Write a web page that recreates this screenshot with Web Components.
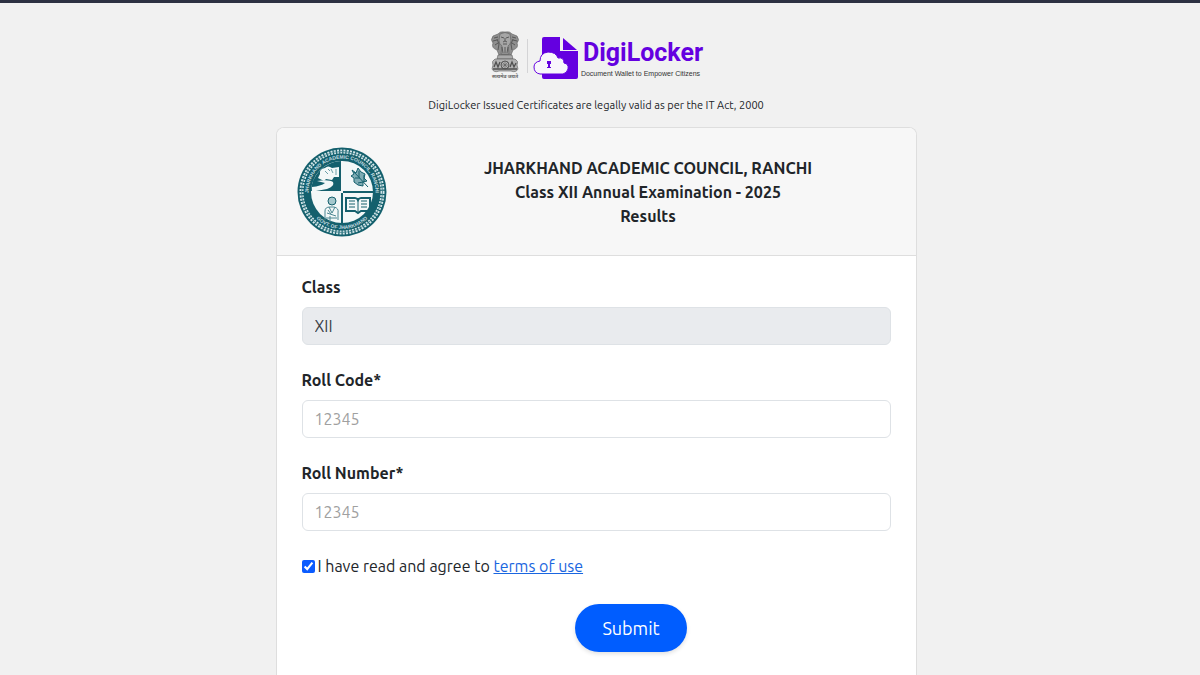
<!DOCTYPE html>
<html lang="en">
<head>
<meta charset="utf-8">
<meta name="viewport" content="width=device-width, initial-scale=1">
<title>DigiLocker Results</title>
<style>
  body {
    margin: 0;
    background: #f1f1f1;
    color: #212529;
    font: 16px/24px Ubuntu, "Noto Sans", "Open Sans", sans-serif;
  }
</style>
</head>
<body>
<results-page>
  <digilocker-logo slot="top"></digilocker-logo>
  <span slot="note">DigiLocker Issued Certificates are legally valid as per the IT Act, 2000</span>
  <result-card>
    <council-seal slot="seal"></council-seal>
    <span slot="title">JHARKHAND ACADEMIC COUNCIL, RANCHI<br>Class XII Annual Examination - 2025<br>Results</span>
    <form-field label="Class" value="XII" disabled></form-field>
    <form-field label="Roll Code*" placeholder="12345"></form-field>
    <form-field label="Roll Number*" placeholder="12345"></form-field>
    <terms-check></terms-check>
    <submit-button>Submit</submit-button>
  </result-card>
</results-page>

<script>
class ResultsPage extends HTMLElement {
  connectedCallback() {
    this.attachShadow({ mode: 'open' });
    this.shadowRoot.innerHTML = `
      <style>
        :host {
          display: flex;
          flex-direction: column;
          align-items: center;
          box-sizing: border-box;
          min-height: 100vh;
          border-top: 3px solid #2d3142;
          padding: 24px 8px 0 0;
        }
        .note {
          margin: 10px 0 12px;
          font-size: 11px;
          line-height: 20px;
          text-align: center;
        }
        main {
          display: flex;
          flex: 1;
          width: 100%;
          max-width: 641px;
        }
      </style>
      <slot name="top"></slot>
      <p class="note"><slot name="note"></slot></p>
      <main><slot></slot></main>
    `;
  }
}
customElements.define('results-page', ResultsPage);

class DigilockerLogo extends HTMLElement {
  connectedCallback() {
    this.attachShadow({ mode: 'open' });
    this.shadowRoot.innerHTML = `
      <style>
        :host { display: flex; align-items: center; height: 58px; }
        svg { display: block; flex: none; }
        .divider { width: 1px; height: 34px; background: #d4d4d6; margin: 0 5px 0 6px; }
        .locker { padding-top: 4px; }
        .brand { margin-left: 3px; padding-top: 6px; color: #6400e0; }
        .name {
          padding-left: 2px;
          font: 700 25px/30px Roboto, sans-serif;
        }
        .tag {
          font: 7px/12px "Liberation Sans", sans-serif;
          color: #333;
        }
      </style>
      <svg class="emblem" width="32" height="50" viewBox="0 0 32 50" role="img" aria-label="State Emblem of India">
        <g fill="#8f8f8f" stroke="#5c5c5c" stroke-width=".6">
          <path d="M9 3Q11 0 16 1Q21 0 23 3L28 5Q31 9 28 12Q30 17 24 19L22 24H10L8 19Q2 17 4 12Q1 9 4 5Z"/>
          <path d="M11 3Q16 0 21 3L22 10Q21 14 19 15L20 23H12L13 15Q10 13 10 9Z" fill="#a6a6a6"/>
          <path d="M9 24H23L24 28H8Z" fill="#aaa"/>
          <path d="M6 28Q2 30 4 34L3 38Q5 42 10 40H22Q27 42 29 38L28 34Q30 30 26 28Z" fill="#b2b2b2"/>
        </g>
        <g fill="none" stroke="#505050" stroke-width=".9">
          <path d="M12 6L15 7M20 6L17 7M14 11Q16 9 18 11M14 13H18M16 7V10"/>
          <path d="M5 7L9 6M4 10L8 9M6 14L9 12M27 7L23 6M28 10L24 9M26 14L23 12"/>
          <path d="M8 8L10 13L9 19M24 8L22 13L23 19M13 16L14 22M19 16L18 22M16 16V22"/>
          <circle cx="16" cy="34" r="4"/>
          <path d="M12 34H20M16 30V38M13 31L19 37M19 31L13 37" stroke-width=".5"/>
          <path d="M5 36L7 31L9 36L11 31M21 36L23 31L25 36L27 32M4 38H28" stroke-width="1.3"/>
        </g>
        <text x="16" y="47" text-anchor="middle" font-size="5" font-weight="700" fill="#666" font-family="Noto Sans Devanagari, Noto Sans, sans-serif">सत्यमेव जयते</text>
      </svg>
      <span class="divider"></span>
      <svg class="locker" width="45" height="44" viewBox="0 0 45 44" aria-hidden="true">
        <path d="M11 1H27V15H45V41Q45 43 43 43H11Q9 43 9 41V3Q9 1 11 1Z" fill="#6400e0"/>
        <path d="M30 2L44 14H30Z" fill="#6400e0"/>
        <path d="M7 38Q1 37 1 31Q1 26 7 25Q7 17 15 16Q23 16 25 22Q31 21 31 27Q36 28 35 33Q34 37 30 38Z" fill="#f8f6fb" stroke="#6400e0"/>
        <path d="M14 25H18V28H17V31H18V32H14V31H15V28H14Z" fill="#6400e0"/>
      </svg>
      <div class="brand">
        <div class="name">DigiLocker</div>
        <div class="tag">Document Wallet to Empower Citizens</div>
      </div>
    `;
  }
}
customElements.define('digilocker-logo', DigilockerLogo);

class CouncilSeal extends HTMLElement {
  connectedCallback() {
    this.attachShadow({ mode: 'open' });
    this.shadowRoot.innerHTML = `
      <style>
        :host { display: block; }
        svg { display: block; }
        text { font: 700 5px "Liberation Sans", sans-serif; fill: #c4dde1; }
      </style>
      <svg width="90" height="90" viewBox="0 0 90 90" role="img" aria-label="Jharkhand Academic Council seal">
        <defs>
          <path id="upper" d="M14.5 59A33.5 33.5 0 1 1 75.5 59"/>
          <path id="lower" d="M11.5 60A36.5 36.5 0 0 0 78.5 60"/>
        </defs>
        <circle cx="45" cy="45" r="44.5" fill="#14606d"/>
        <circle cx="45" cy="45" r="40.5" fill="none" stroke="#d5e6e9" stroke-width="4" stroke-dasharray="2 1.2"/>
        <circle cx="45" cy="45" r="40.5" fill="none" stroke="#3d7f8a" stroke-width=".8"/>
        <text><textPath href="#upper" startOffset="50%" text-anchor="middle">JHARKHAND ACADEMIC COUNCIL, RANCHI</textPath></text>
        <text><textPath href="#lower" startOffset="50%" text-anchor="middle">GOVT. OF JHARKHAND</textPath></text>
        <circle cx="45" cy="45" r="31" fill="#f3f8f8"/>
        <path d="M44 14A31 31 0 0 0 14 45H44Z" fill="#14606d"/>
        <g fill="#f3f8f8">
          <path d="M23 27Q22 22 28 21Q31 18 35 21L42 20V30L37 30L35 33L29 32L27 34L21 31Z"/>
          <path d="M15 40Q24 39 28 36L20 34Q32 32 36 35Q38 39 30 42L19 44H15Z"/>
        </g>
        <g fill="none" stroke="#14606d" stroke-width="1">
          <path d="M28 24L31 27M34 22L36 26M39 22V28M31 22L33 24" stroke="#6ca0a9"/>
          <path d="M55 23L59 26L61 21L64 25L68 27L67 31L70 34L66 35V39L61 38L57 35L57 31L54 29L57 27Z" fill="#7eacb4"/>
          <path d="M57 25L71 40M62 24V30M58 31L63 31M67 28V35M61 36L66 35"/>
          <circle cx="35" cy="54" r="4" fill="#a5c8cd"/>
          <path d="M28 73V64Q28 60 33 60H37Q42 61 41 66V73M32 60L35 66L38 60M30 66L39 69M33 69V75M29 71H40M31 63L34 67" stroke="#4b8792"/>
          <path d="M49 51H58Q60 51 61 53Q62 51 64 51H73V64H64L61 66L58 64H49Z" stroke-width="2"/>
          <path d="M61 53V65M52 54H58M52 57H58M52 60H58M64 54H70M64 57H70M64 60H70"/>
        </g>
        <path d="M45 14V76M14 45H76" stroke="#14606d" stroke-width="2"/>
        <path d="M45 14V45H14" fill="none" stroke="#f3f8f8" stroke-width="2"/>
      </svg>
    `;
  }
}
customElements.define('council-seal', CouncilSeal);

class ResultCard extends HTMLElement {
  connectedCallback() {
    this.attachShadow({ mode: 'open' });
    this.shadowRoot.innerHTML = `
      <style>
        :host {
          display: block;
          flex: 1;
          box-sizing: border-box;
          background: white;
          border: 1px solid #dedede;
          border-bottom: 0;
          border-radius: 8px 8px 0 0;
          overflow: hidden;
        }
        header {
          display: flex;
          align-items: center;
          gap: 14px;
          padding: 19px 20px 18px;
          background: #f7f7f7;
          border-bottom: 1px solid #dedede;
        }
        h1 {
          flex: 1;
          margin: 0;
          font-size: 16px;
          line-height: 24px;
          text-align: center;
        }
        form {
          display: flex;
          flex-direction: column;
          gap: 23px;
          padding: 19px 25px 0;
        }
      </style>
      <header>
        <slot name="seal"></slot>
        <h1><slot name="title"></slot></h1>
      </header>
      <form><slot></slot></form>
    `;
  }
}
customElements.define('result-card', ResultCard);

class FormField extends HTMLElement {
  connectedCallback() {
    this.attachShadow({ mode: 'open' });
    this.shadowRoot.innerHTML = `
      <style>
        :host { display: flex; flex-direction: column; gap: 8px; }
        label { font-weight: 700; }
        input {
          box-sizing: border-box;
          width: 100%;
          height: 38px;
          padding: 6px 12px;
          border: 1px solid #dee2e6;
          border-radius: 6px;
          background: white;
          color: #212529;
          font: inherit;
        }
        input::placeholder { color: #a0a0a0; opacity: 1; }
        input:disabled { background: #e9ebee; color: #3a3f48; }
      </style>
      <label for="field">${this.getAttribute('label')}</label>
      <input id="field" type="text">
    `;
    const input = this.shadowRoot.querySelector('input');
    input.value = this.getAttribute('value') || '';
    input.placeholder = this.getAttribute('placeholder') || '';
    input.disabled = this.hasAttribute('disabled');
  }
}
customElements.define('form-field', FormField);

class TermsCheck extends HTMLElement {
  connectedCallback() {
    this.attachShadow({ mode: 'open' });
    this.shadowRoot.innerHTML = `
      <style>
        :host { display: flex; align-items: center; gap: 3px; }
        input { width: 13px; height: 13px; margin: 0; accent-color: #0b5cff; }
        a { color: #1a66e0; }
      </style>
      <input id="agree" type="checkbox" checked>
      <label for="agree">I have read and agree to <a href="#">terms of use</a></label>
    `;
  }
}
customElements.define('terms-check', TermsCheck);

class SubmitButton extends HTMLElement {
  connectedCallback() {
    this.attachShadow({ mode: 'open' });
    this.shadowRoot.innerHTML = `
      <style>
        :host { display: flex; justify-content: center; padding: 3px 0 24px 70px; }
        button {
          padding: 10px 27px;
          border: 0;
          border-radius: 24px;
          background: #005dff;
          color: white;
          box-shadow: 0 2px 4px rgba(0,0,0,0.12);
          font: inherit;
          font-size: 18px;
          line-height: 28px;
        }
      </style>
      <button type="submit"><slot></slot></button>
    `;
  }
}
customElements.define('submit-button', SubmitButton);
</script>
</body>
</html>
